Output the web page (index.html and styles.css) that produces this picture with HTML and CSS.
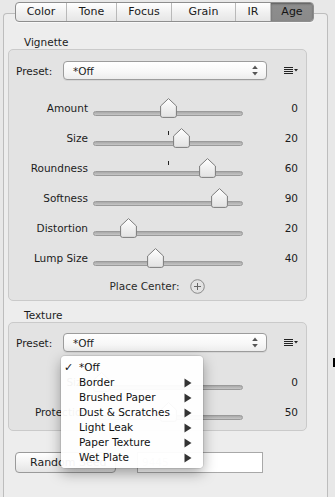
FILE: index.html
```html
<!DOCTYPE html>
<html>
<head>
<meta charset="utf-8">
<link rel="stylesheet" href="styles.css">
</head>
<body>
<div class="window">
  <svg width="0" height="0" class="defs">
    <defs>
      <linearGradient id="thumbg" x1="0" y1="0" x2="0" y2="1">
        <stop offset="0" stop-color="#ffffff"/>
        <stop offset="1" stop-color="#e2e2e2"/>
      </linearGradient>
      <symbol id="thumb" viewBox="0 0 17 20">
        <path d="M8.5 0.6 L16.4 8 L16.4 17.4 Q16.4 19.4 14.4 19.4 L2.6 19.4 Q0.6 19.4 0.6 17.4 L0.6 8 Z" fill="url(#thumbg)" stroke="#7c7c7c" stroke-width="1"/>
      </symbol>
      <symbol id="updown" viewBox="0 0 6 11">
        <path d="M3 0.5 L5.8 4 L0.2 4 Z" fill="#555"/>
        <path d="M3 10.5 L5.8 7 L0.2 7 Z" fill="#555"/>
      </symbol>
      <symbol id="actions" viewBox="0 0 15 9">
        <rect x="0" y="1" width="9" height="1" fill="#222"/>
        <rect x="0" y="3" width="9" height="1" fill="#222"/>
        <rect x="0" y="5" width="9" height="1" fill="#222"/>
        <rect x="0" y="7" width="9" height="1" fill="#222"/>
        <path d="M10 3 L14 3 L12 5.5 Z" fill="#222"/>
      </symbol>
      <symbol id="submenu" viewBox="0 0 8 10">
        <path d="M0.5 0.5 L7.5 5 L0.5 9.5 Z" fill="#333"/>
      </symbol>
    </defs>
  </svg>

  <div class="tabs">
    <span class="tab">Color</span>
    <span class="tab">Tone</span>
    <span class="tab">Focus</span>
    <span class="tab">Grain</span>
    <span class="tab">IR</span>
    <span class="tab selected">Age</span>
  </div>

  <div class="tabbox">
    <div class="section-title">Vignette</div>
    <div class="group vignette">
      <div class="preset-row">
        <span class="preset-label">Preset:</span>
        <div class="popup"><span>*Off</span><svg class="updown"><use href="#updown"/></svg></div>
        <svg class="actions"><use href="#actions"/></svg>
      </div>

      <div class="slider-row first">
        <span class="s-label">Amount</span>
        <div class="slider"><div class="track"></div><svg class="thumb" style="left:66.5px"><use href="#thumb"/></svg></div>
        <span class="s-value">0</span>
      </div>
      <div class="slider-row">
        <span class="s-label">Size</span>
        <div class="slider"><div class="tick"></div><div class="track"></div><svg class="thumb" style="left:79.8px"><use href="#thumb"/></svg></div>
        <span class="s-value">20</span>
      </div>
      <div class="slider-row">
        <span class="s-label">Roundness</span>
        <div class="slider"><div class="tick"></div><div class="track"></div><svg class="thumb" style="left:106px"><use href="#thumb"/></svg></div>
        <span class="s-value">60</span>
      </div>
      <div class="slider-row">
        <span class="s-label">Softness</span>
        <div class="slider"><div class="track"></div><svg class="thumb" style="left:118px"><use href="#thumb"/></svg></div>
        <span class="s-value">90</span>
      </div>
      <div class="slider-row">
        <span class="s-label">Distortion</span>
        <div class="slider"><div class="track"></div><svg class="thumb" style="left:26.6px"><use href="#thumb"/></svg></div>
        <span class="s-value">20</span>
      </div>
      <div class="slider-row">
        <span class="s-label">Lump Size</span>
        <div class="slider"><div class="track"></div><svg class="thumb" style="left:53.5px"><use href="#thumb"/></svg></div>
        <span class="s-value">40</span>
      </div>

      <div class="place-center">
        <span>Place Center:</span>
        <svg class="plus" viewBox="0 0 15 15"><circle cx="7.5" cy="7.5" r="6.8" fill="none" stroke="#8a8a8a" stroke-width="1"/><rect x="4" y="7" width="7" height="1" fill="#666"/><rect x="7" y="4" width="1" height="7" fill="#666"/></svg>
      </div>
    </div>

    <div class="section-title texture-title">Texture</div>
    <div class="group texture">
      <div class="preset-row">
        <span class="preset-label">Preset:</span>
        <div class="popup"><span>*Off</span><svg class="updown"><use href="#updown"/></svg></div>
        <svg class="actions"><use href="#actions"/></svg>
      </div>
      <div class="slider-row first">
        <span class="s-label">Size</span>
        <div class="slider"><div class="track"></div><svg class="thumb" style="left:0px"><use href="#thumb"/></svg></div>
        <span class="s-value">0</span>
      </div>
      <div class="slider-row">
        <span class="s-label">Protection</span>
        <div class="slider"><div class="track"></div><svg class="thumb" style="left:66.5px"><use href="#thumb"/></svg></div>
        <span class="s-value">50</span>
      </div>
    </div>

    <div class="seed-row">
      <div class="seed-btn">Random Seed</div>
      <div class="seed-field">9445</div>
    </div>
  </div>

  <div class="menu">
    <div class="m-item"><span class="check">✓</span><span>*Off</span></div>
    <div class="m-item"><span>Border</span><svg class="sub"><use href="#submenu"/></svg></div>
    <div class="m-item"><span>Brushed Paper</span><svg class="sub"><use href="#submenu"/></svg></div>
    <div class="m-item"><span>Dust &amp; Scratches</span><svg class="sub"><use href="#submenu"/></svg></div>
    <div class="m-item"><span>Light Leak</span><svg class="sub"><use href="#submenu"/></svg></div>
    <div class="m-item"><span>Paper Texture</span><svg class="sub"><use href="#submenu"/></svg></div>
    <div class="m-item"><span>Wet Plate</span><svg class="sub"><use href="#submenu"/></svg></div>
  </div>

  <div class="cursor"></div>
</div>
</body>
</html>
```

FILE: styles.css
```css
* { box-sizing: border-box; }

html, body {
  margin: 0;
  padding: 0;
}

body {
  width: 335px;
  height: 497px;
  overflow: hidden;
  background: #e8e8e8;
  font-family: "DejaVu Sans", "Liberation Sans", sans-serif;
  font-size: 10.5px;
  color: #1c1c1c;
}

.defs {
  position: absolute;
  width: 0;
  height: 0;
}

.window {
  position: relative;
  width: 335px;
  height: 497px;
  padding-top: 2px;
  overflow: hidden;
}

/* ---------- tabs ---------- */
.tabs {
  position: relative;
  z-index: 2;
  margin-left: 15px;
  width: 299px;
  height: 20px;
  display: grid;
  grid-template-columns: 51px 50px 55px 64px 35px 1fr;
  border: 1px solid #8e8e8e;
  border-radius: 4px;
  background: linear-gradient(#ffffff, #f1f1f1 50%, #e6e6e6);
  overflow: hidden;
  box-shadow: 0 1px 0 rgba(255,255,255,0.6);
}

.tab {
  display: flex;
  align-items: center;
  justify-content: center;
  font-size: 11px;
  line-height: 18px;
  border-right: 1px solid #b9b9b9;
  color: #1a1a1a;
}

.tab.selected {
  border-right: none;
  background: linear-gradient(#8e8e8e, #8a8a8a);
  box-shadow: inset 0 1px 2px rgba(0,0,0,0.35);
  color: #141414;
}

.tabbox {
  margin-top: -9px;
  margin-left: 3px;
  width: 325px;
  height: 492px;
  border: 1px solid #bdbdbd;
  border-bottom: none;
  border-radius: 4px 4px 0 0;
  background: #ededed;
  padding: 22px 0 0 4px;
}

.section-title {
  height: 13px;
  line-height: 13px;
  padding-left: 16px;
  font-size: 10.5px;
}

.texture-title {
  margin-top: 8px;
}

.group {
  width: 299px;
  border: 1px solid #cacaca;
  border-radius: 5px;
  background: #e3e3e3;
  padding-left: 7px;
}

.vignette {
  height: 252px;
  padding-top: 11px;
}

.texture {
  height: 109px;
  padding-top: 10px;
}

/* ---------- preset row ---------- */
.preset-row {
  display: flex;
  align-items: center;
  height: 19px;
}

.preset-label {
  width: 47px;
}

.popup {
  width: 204px;
  height: 19px;
  display: flex;
  align-items: center;
  justify-content: space-between;
  padding: 0 8px 0 9px;
  border: 1px solid #9c9c9c;
  border-radius: 4px;
  background: linear-gradient(#ffffff, #f7f7f7 60%, #ededed);
  box-shadow: 0 1px 0 rgba(0,0,0,0.06);
}

.updown {
  width: 6px;
  height: 11px;
}

.actions {
  margin-left: 17px;
  width: 15px;
  height: 9px;
}

/* ---------- sliders ---------- */
.slider-row {
  display: grid;
  grid-template-columns: 72px 150px 50px;
  column-gap: 5px;
  height: 30px;
  align-items: start;
}

.vignette .slider-row.first { margin-top: 16px; }
.texture .slider-row.first { margin-top: 18px; }

.s-label {
  text-align: right;
  line-height: 24px;
  white-space: nowrap;
}

.s-value {
  text-align: right;
  line-height: 24px;
  margin-left: -5px;
}

.slider {
  position: relative;
  height: 30px;
}

.track {
  position: absolute;
  left: 0;
  right: 0;
  top: 15px;
  height: 5px;
  border: 1px solid #9a9a9a;
  border-radius: 3px;
  background: linear-gradient(#a9a9a9, #c6c6c6);
}

.tick {
  position: absolute;
  left: 75px;
  top: 5px;
  width: 1px;
  height: 4px;
  background: #222;
}

.thumb {
  position: absolute;
  top: 2px;
  width: 17px;
  height: 20px;
  z-index: 1;
}

.place-center {
  height: 20px;
  display: flex;
  align-items: center;
  justify-content: center;
  gap: 11px;
  margin-left: -7px;
  color: #2a2a2a;
}

.plus {
  width: 15px;
  height: 15px;
}

/* ---------- seed row ---------- */
.seed-row {
  display: flex;
  margin-top: 21px;
  margin-left: 7px;
  gap: 21px;
}

.seed-btn {
  width: 101px;
  height: 21px;
  border: 1px solid #9a9a9a;
  border-radius: 4px;
  background: linear-gradient(#ffffff, #f0f0f0 60%, #e4e4e4);
  padding-left: 14px;
  line-height: 19px;
  font-size: 11px;
}

.seed-field {
  width: 126px;
  height: 21px;
  border: 1px solid #a8a8a8;
  background: #ffffff;
  padding-left: 4px;
  line-height: 19px;
  color: #bdbdbd;
}

/* ---------- popup menu (overlay) ---------- */
.menu {
  position: absolute;
  left: 61px;
  top: 356px;
  width: 142px;
  height: 112px;
  padding-top: 4px;
  background: rgba(255,255,255,0.95);
  border-radius: 4px;
  box-shadow: 0 5px 14px rgba(0,0,0,0.35), 0 0 0 1px rgba(0,0,0,0.08);
  z-index: 5;
}

.m-item {
  position: relative;
  height: 15px;
  line-height: 15px;
  padding-left: 18px;
  font-size: 10.5px;
  color: #111;
}

.check {
  position: absolute;
  left: 3px;
  top: 0;
  font-size: 11px;
  font-weight: bold;
}

.sub {
  position: absolute;
  right: 11px;
  top: 3px;
  width: 8px;
  height: 10px;
}

.cursor {
  position: absolute;
  left: 333px;
  top: 358px;
  width: 2px;
  height: 9px;
  background: #000;
}
```
